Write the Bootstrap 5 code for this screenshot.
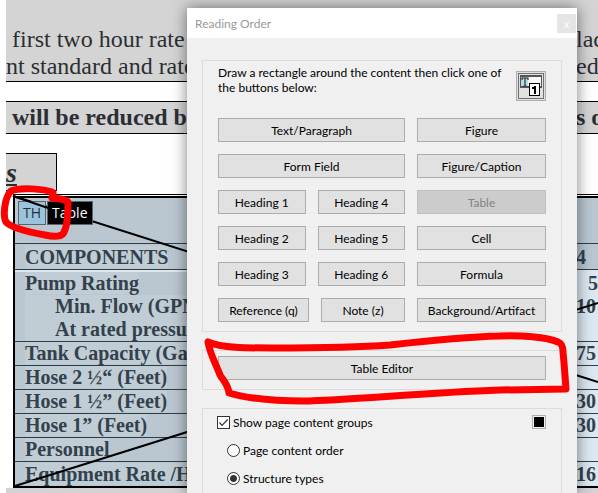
<!DOCTYPE html>
<html lang="en">
<head>
<meta charset="utf-8">
<meta name="viewport" content="width=device-width, initial-scale=1">
<title>Reading Order</title>
<link href="https://cdn.jsdelivr.net/npm/bootstrap@5.3.0/dist/css/bootstrap.min.css" rel="stylesheet">
<style>
  body { background: #fff; color: #000; }
  .doc { font-family: "Liberation Serif", serif; font-size: 24px; line-height: 27px; color: #2b2f33; padding-left: 6px; white-space: nowrap; }
  .doc-block { background: #d4d4d4; border-bottom: 1px solid #000; }
  .doc-rate { padding-top: 26px; padding-bottom: 1px; }
  .doc-notice { margin-top: 19px; border-top: 1px solid #000; line-height: 31px; }
  .doc-tail { width: 22px; flex: none; }
  .indent { padding-left: 6px; }
  .doc-heading { background: #d4d4d4; border: 1px solid #000; border-left: 0; width: 51px; height: 38px; margin-top: 19px; font-size: 28px; line-height: 38px; }
  .grid-frame { margin: 3px 0 0 7px; border-top: 1px solid #000; padding-top: 1px; }
  .doc-foot { background: #d4d2d4; }
  .grid-table { font-size: 20px; line-height: 23px; color: #33414c; border-top: 2px solid #000; border-left: 2px solid #000; border-bottom: 2px solid #000; border-collapse: separate; border-spacing: 0; }
  .grid-table th, .grid-table td { padding: 0 0 0 10px; border-bottom: 1px solid #2f3d48; background: #bac7d1; height: 24px; font-weight: bold; vertical-align: bottom; text-align: left; }
  .grid-table tr > :last-child { width: 22px; padding: 0 0 0 2px; }
  .grid-table tbody tr > :last-child { background: #dce8f2; }
  .grid-table .tag-row > * { height: 46px; }
  .grid-table .name-row > * { height: 26px; }
  .grid-table tbody tr:first-child > * { border-top: 2px solid #dfe6ec; }
  .grid-table tbody tr:last-child > * { border-bottom: 0; }
  .grid-table .run { background: #c0cdd5; }
  .sub { padding-left: 30px; }
  .marks, .ink { left: 0; top: 0; width: 598px; height: 493px; pointer-events: none; }
  .tags { left: 18px; top: 201px; gap: 1px; font-family: "Open Sans", sans-serif; font-size: 14px; line-height: 22px; }
  .tag-item { border: 1px solid #5a646c; height: 24px; padding: 0 4px; }
  .tag-th { background: #9cc3dd; color: #26323b; }
  .tag-table { background: #000; color: #fff; }
  .dialog-win { left: 187px; right: 21px; top: 8px; bottom: 0; background: #f0f0f0; box-shadow: 0 0 14px rgba(0,0,0,.5); font-family: Lato, sans-serif; font-size: 12px; line-height: 15px; }
  .title-bar { background: #fff; height: 30px; color: #999; padding-left: 8px; }
  .close-btn { width: 19px; height: 19px; background: #e5e5e5; border: 0; color: #fff; font-size: 11px; line-height: 15px; margin-right: 1px; }
  .groups { padding: 22px 15px 0; display: flex; flex-direction: column; gap: 18px; }
  .group-box { border: 1px solid #dcdcdc; padding: 5px 15px 9px; }
  .group-main { padding-top: 4px; }
  .group-show { padding: 6px 15px 30px 14px; }
  .keys { display: grid; grid-template-columns: 187fr 129fr; gap: 12px; margin-top: 17px; }
  .pair { display: grid; grid-template-columns: 1fr 1fr; gap: 12px; }
  .pair-last { grid-template-columns: 91fr 84fr; }
  .win-btn { --bs-btn-padding-x: 0; --bs-btn-padding-y: 0; --bs-btn-font-size: 12px; --bs-btn-line-height: 15px; --bs-btn-border-radius: 0; --bs-btn-bg: #e1e1e1; --bs-btn-border-color: #adadad; --bs-btn-color: #000; --bs-btn-hover-bg: #e5f1fb; --bs-btn-hover-border-color: #0078d7; --bs-btn-disabled-bg: #ccc; --bs-btn-disabled-border-color: #bfbfbf; --bs-btn-disabled-color: #838383; --bs-btn-disabled-opacity: 1; height: 24px; white-space: nowrap; font-family: inherit; }
  .icon-btn { width: 30px; height: 30px; flex: none; margin-top: 6px; }
  .group-show .form-check-input { width: 13px; height: 13px; margin: 0; border: 1px solid #333; background-color: #fff; flex: none; }
  .group-show .form-check-input[type=checkbox] { border-radius: 0; }
  .group-show .form-check-input[type=checkbox]:checked { background-image: url("data:image/svg+xml,%3Csvg xmlns='http://www.w3.org/2000/svg' viewBox='0 0 11 11'%3E%3Cpath d='M1.5 5.5 4 8.3 9.7 2.5' fill='none' stroke='%23333' stroke-width='1.2'/%3E%3C/svg%3E"); }
  .group-show .form-check-input[type=radio]:checked { background-image: radial-gradient(circle, #333 3px, transparent 4px); }
  .option { display: flex; align-items: center; gap: 3px; height: 15px; }
  .radio-set { padding-left: 10px; margin-top: 13px; display: grid; gap: 13px; }
  .swatch { width: 14px; height: 14px; background: #000; border: 1px solid #adadad; box-shadow: inset 0 0 0 1px #f0f0f0; padding: 0; }
</style>
<script src="https://cdn.jsdelivr.net/npm/bootstrap@5.3.0/dist/js/bootstrap.bundle.min.js"></script>
</head>
<body class="overflow-hidden">
<div class="position-relative vh-100 overflow-hidden">
  <main class="doc d-flex flex-column min-vh-100">
    <div class="doc-block doc-rate">
      <div class="d-flex justify-content-between"><span class="indent">first two hour rate</span><span class="doc-tail">lac</span></div>
      <div class="d-flex justify-content-between"><span>nt standard and rate</span><span class="doc-tail">ed</span></div>
    </div>
    <div class="doc-block doc-notice d-flex justify-content-between fw-bold"><span class="indent">will be reduced b</span><span class="doc-tail">s o</span></div>
    <div class="doc-heading fw-bold fst-italic text-decoration-underline">s</div>
    <div class="grid-frame">
      <table class="grid-table w-100">
        <thead>
          <tr class="tag-row"><th></th><th></th></tr>
          <tr class="name-row"><th><span class="run">COMPONENTS</span></th><th>4</th></tr>
        </thead>
        <tbody>
          <tr><td><div><span class="run">Pump Rating</span></div><div class="run"><div class="sub">Min. Flow (GPM)</div><div class="sub">At rated pressure</div></div></td><td class="align-top"><div class="ps-2 ms-1">5</div><div>10</div></td></tr>
          <tr><td><span class="run">Tank Capacity (Gal)</span></td><td>75</td></tr>
          <tr><td><span class="run">Hose 2 ½“ (Feet)</span></td><td></td></tr>
          <tr><td><span class="run">Hose 1 ½” (Feet)</span></td><td>30</td></tr>
          <tr><td><span class="run">Hose 1” (Feet)</span></td><td>30</td></tr>
          <tr><td><span class="run">Personnel</span></td><td></td></tr>
          <tr><td><span class="run">Equipment Rate /H</span></td><td>16</td></tr>
        </tbody>
      </table>
    </div>
    <div class="doc-foot flex-grow-1"></div>
  </main>

  <svg class="marks position-absolute" viewBox="0 0 598 493" fill="none" stroke="#000" stroke-width="2" aria-hidden="true">
    <path d="M13 196 598 382M15 486 598 303"/>
  </svg>
  <div class="tags position-absolute d-flex">
    <span class="tag-item tag-th">TH</span><span class="tag-item tag-table">Table</span>
  </div>
  <svg class="marks position-absolute" viewBox="0 0 598 493" fill="none" stroke="#000" stroke-width="2" aria-hidden="true">
    <path d="M13 196 48 208"/>
  </svg>

  <section class="dialog-win position-absolute" role="dialog" aria-labelledby="dlgTitle">
    <header class="title-bar d-flex align-items-center justify-content-between">
      <span id="dlgTitle">Reading Order</span>
      <button type="button" class="close-btn p-0" aria-label="Close">x</button>
    </header>
    <div class="groups">
      <div class="group-box group-main">
        <div class="d-flex justify-content-between">
          <div class="text-nowrap">Draw a rectangle around the content then click one of<br>the buttons below:</div>
          <button type="button" class="btn win-btn icon-btn" aria-label="Number order">
            <svg class="d-block" width="28" height="28" viewBox="0 0 28 28" aria-hidden="true">
              <rect x="1.5" y="1.5" width="25" height="25" fill="none" stroke="#000" stroke-dasharray="1 1"/>
              <path d="M3 3h22v13H3z" fill="#555"/><path d="M4 5h20v9H4z" fill="#f7f7f7"/><path d="M4 5h7v9H4z" fill="#b9d8ea"/>
              <path d="M5 8V6h6v2M8 6v8M6.500 14h3" fill="none" stroke="#333" stroke-width="1.200"/>
              <rect x="12.500" y="11.500" width="10" height="12" fill="#fff" stroke="#000"/>
              <path d="M17 14h2v8h-2v-5h-2v-2h2z" fill="#000"/>
            </svg>
          </button>
        </div>
        <div class="keys">
          <button type="button" class="btn win-btn">Text/Paragraph</button><button type="button" class="btn win-btn">Figure</button>
          <button type="button" class="btn win-btn">Form Field</button><button type="button" class="btn win-btn">Figure/Caption</button>
          <div class="pair"><button type="button" class="btn win-btn">Heading 1</button><button type="button" class="btn win-btn">Heading 4</button></div><button type="button" class="btn win-btn" disabled>Table</button>
          <div class="pair"><button type="button" class="btn win-btn">Heading 2</button><button type="button" class="btn win-btn">Heading 5</button></div><button type="button" class="btn win-btn">Cell</button>
          <div class="pair"><button type="button" class="btn win-btn">Heading 3</button><button type="button" class="btn win-btn">Heading 6</button></div><button type="button" class="btn win-btn">Formula</button>
          <div class="pair pair-last"><button type="button" class="btn win-btn">Reference (q)</button><button type="button" class="btn win-btn">Note (z)</button></div><button type="button" class="btn win-btn">Background/Artifact</button>
        </div>
      </div>
      <div class="group-box"><button type="button" class="btn win-btn w-100 d-block">Table Editor</button></div>
      <div class="group-box group-show">
        <div class="d-flex justify-content-between">
          <div class="option"><input class="form-check-input" type="checkbox" id="show" checked><label for="show">Show page content groups</label></div>
          <button type="button" class="swatch" aria-label="Group colour"></button>
        </div>
        <div class="radio-set">
          <div class="option"><input class="form-check-input" type="radio" name="kind" id="order"><label for="order">Page content order</label></div>
          <div class="option"><input class="form-check-input" type="radio" name="kind" id="types" checked><label for="types">Structure types</label></div>
        </div>
      </div>
    </div>
  </section>

  <svg class="ink position-absolute" viewBox="0 0 598 493" fill="none" stroke="#f00" stroke-width="7" stroke-linecap="round" stroke-linejoin="round" aria-hidden="true">
    <path d="M52 192C44 189 20 187 11 191C4 198 3 217 6 222C12 229 34 233 45 235C54 237 63 237 64 232C68 225 68 210 68 202C66 199 59 199 52 198L53 193"/>
    <path d="M208 342C210 354 215 362 220 375C223 380 228 384 229 393C250 399 275 401 303 401C350 400 420 393 500 390L566 389C565 375 564 362 563 352C563 346 561 343 558 342C547 337 520 335 500 336C460 337 425 341 390 345C350 348 310 348 273 348C246 348 222 348 208 342Z"/>
  </svg>
</div>
</body>
</html>
